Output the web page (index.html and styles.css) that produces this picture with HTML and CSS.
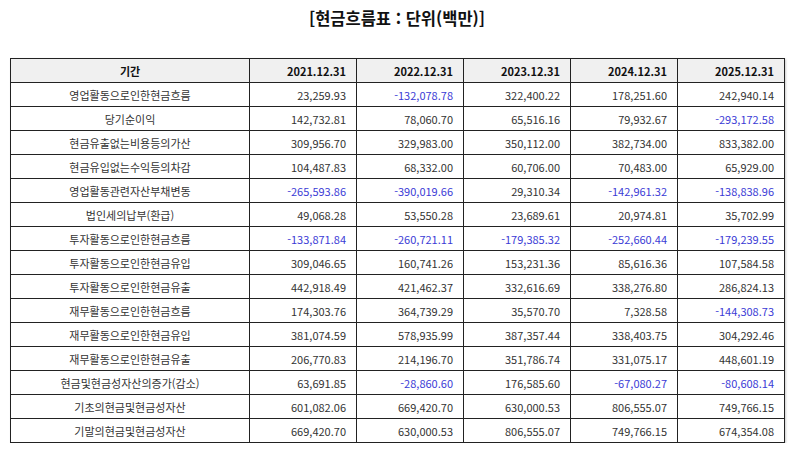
FILE: index.html
```html
<!DOCTYPE html>
<html lang="ko">
<head>
<meta charset="utf-8">
<link rel="stylesheet" href="styles.css">
</head>
<body>
<div class="page">
  <h1 class="title">[현금흐름표 : 단위(백만)]</h1>
  <table class="cf">
    <colgroup>
      <col class="c-label"><col class="c-num"><col class="c-num"><col class="c-num"><col class="c-num"><col class="c-num">
    </colgroup>
    <thead>
      <tr><th class="lab">기간</th><th>2021.12.31</th><th>2022.12.31</th><th>2023.12.31</th><th>2024.12.31</th><th>2025.12.31</th></tr>
    </thead>
    <tbody>
      <tr><td class="lab">영업활동으로인한현금흐름</td><td>23,259.93</td><td class="neg">-132,078.78</td><td>322,400.22</td><td>178,251.60</td><td>242,940.14</td></tr>
      <tr><td class="lab">당기순이익</td><td>142,732.81</td><td>78,060.70</td><td>65,516.16</td><td>79,932.67</td><td class="neg">-293,172.58</td></tr>
      <tr><td class="lab">현금유출없는비용등의가산</td><td>309,956.70</td><td>329,983.00</td><td>350,112.00</td><td>382,734.00</td><td>833,382.00</td></tr>
      <tr><td class="lab">현금유입없는수익등의차감</td><td>104,487.83</td><td>68,332.00</td><td>60,706.00</td><td>70,483.00</td><td>65,929.00</td></tr>
      <tr><td class="lab">영업활동관련자산부채변동</td><td class="neg">-265,593.86</td><td class="neg">-390,019.66</td><td>29,310.34</td><td class="neg">-142,961.32</td><td class="neg">-138,838.96</td></tr>
      <tr><td class="lab">법인세의납부(환급)</td><td>49,068.28</td><td>53,550.28</td><td>23,689.61</td><td>20,974.81</td><td>35,702.99</td></tr>
      <tr><td class="lab">투자활동으로인한현금흐름</td><td class="neg">-133,871.84</td><td class="neg">-260,721.11</td><td class="neg">-179,385.32</td><td class="neg">-252,660.44</td><td class="neg">-179,239.55</td></tr>
      <tr><td class="lab">투자활동으로인한현금유입</td><td>309,046.65</td><td>160,741.26</td><td>153,231.36</td><td>85,616.36</td><td>107,584.58</td></tr>
      <tr><td class="lab">투자활동으로인한현금유출</td><td>442,918.49</td><td>421,462.37</td><td>332,616.69</td><td>338,276.80</td><td>286,824.13</td></tr>
      <tr><td class="lab">재무활동으로인한현금흐름</td><td>174,303.76</td><td>364,739.29</td><td>35,570.70</td><td>7,328.58</td><td class="neg">-144,308.73</td></tr>
      <tr><td class="lab">재무활동으로인한현금유입</td><td>381,074.59</td><td>578,935.99</td><td>387,357.44</td><td>338,403.75</td><td>304,292.46</td></tr>
      <tr><td class="lab">재무활동으로인한현금유출</td><td>206,770.83</td><td>214,196.70</td><td>351,786.74</td><td>331,075.17</td><td>448,601.19</td></tr>
      <tr><td class="lab">현금및현금성자산의증가(감소)</td><td>63,691.85</td><td class="neg">-28,860.60</td><td>176,585.60</td><td class="neg">-67,080.27</td><td class="neg">-80,608.14</td></tr>
      <tr><td class="lab">기초의현금및현금성자산</td><td>601,082.06</td><td>669,420.70</td><td>630,000.53</td><td>806,555.07</td><td>749,766.15</td></tr>
      <tr><td class="lab">기말의현금및현금성자산</td><td>669,420.70</td><td>630,000.53</td><td>806,555.07</td><td>749,766.15</td><td>674,354.08</td></tr>
    </tbody>
  </table>
</div>
</body>
</html>
```

FILE: styles.css
```css
html, body {
  margin: 0;
  padding: 0;
  background: #ffffff;
}
body {
  font-family: "Noto Sans CJK KR", "Noto Sans", "DejaVu Sans", sans-serif;
  color: #222222;
}
.page {
  padding: 5px 10px 0 10px;
}
.title {
  margin: 0;
  height: 26px;
  line-height: 26px;
  text-align: center;
  font-size: 16.5px;
  font-weight: bold;
  color: #111111;
}
.cf {
  margin-top: 27px;
  width: 774px;
  border-collapse: collapse;
  table-layout: fixed;
  font-size: 11px;
  box-shadow: 1px 1px 2px rgba(0,0,0,0.2);
}
.c-label { width: 239px; }
.c-num { width: 107px; }
.cf th, .cf td {
  border: 1px solid #222222;
  height: 24px;
  padding: 0 10px 0 4px;
  text-align: right;
  line-height: 14px;
  white-space: nowrap;
  box-sizing: border-box;
}
.cf th {
  background: #f0f0f0;
  font-weight: bold;
  color: #111111;
}
.cf .lab {
  text-align: center;
  padding: 0 4px;
}
.cf td { color: #333333; }
.cf td.neg { color: #3b3bd6; }
```
